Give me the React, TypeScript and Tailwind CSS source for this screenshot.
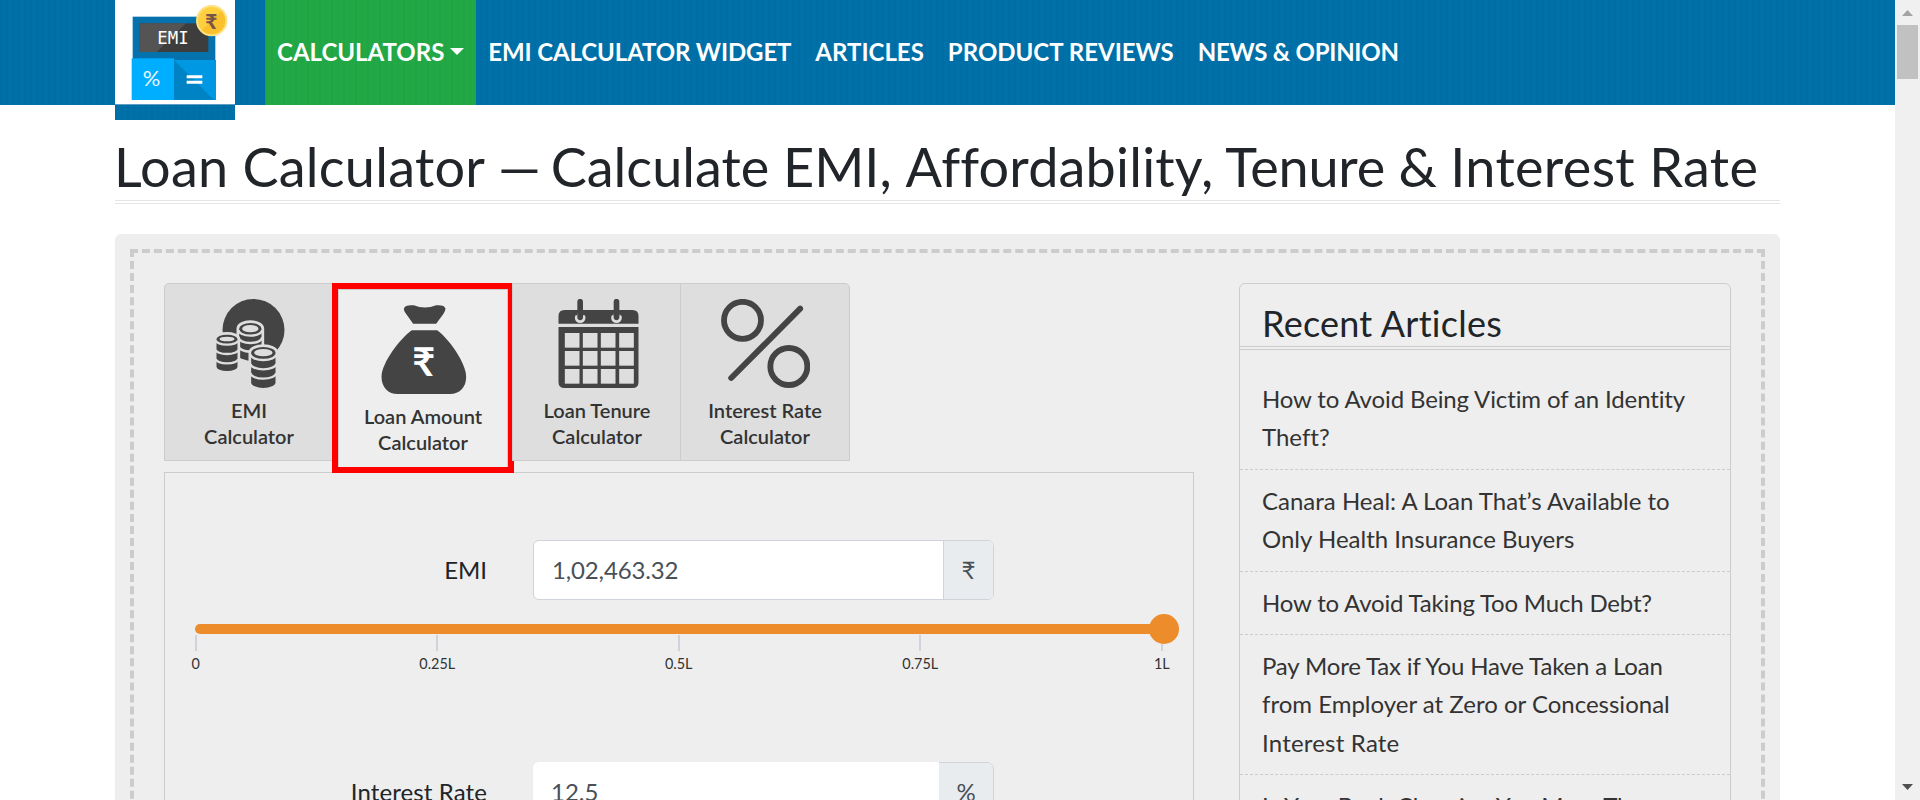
import type { ReactNode } from "react";

const dark = "#444444";

function CoinStack({ x1, x2, cy, ry, bottom, gaps, bg }: { x1: number; x2: number; cy: number; ry: number; bottom: number; gaps: number[]; bg: string }) {
  const rx = (x2 - x1) / 2;
  const cx = (x1 + x2) / 2;
  const body = `M${x1} ${cy}A${rx} ${ry} 0 0 1 ${x2} ${cy}V${bottom - ry}A${rx} ${ry} 0 0 1 ${x1} ${bottom - ry}Z`;
  return (
    <g>
      <path d={body} fill={dark} stroke={bg} strokeWidth={16} />
      <path d={body} fill={dark} />
      <ellipse cx={cx} cy={cy} rx={rx - 9} ry={ry - 6} fill={bg} />
      {gaps.map((g) => (
        <path key={g} d={`M${x1 - 2} ${g - ry}A${rx + 2} ${ry} 0 0 0 ${x2 + 2} ${g - ry}`} fill="none" stroke={bg} strokeWidth={7} />
      ))}
    </g>
  );
}

function CoinsIcon() {
  const bg = "#dedede";
  return (
    <svg className="h-[89px] w-[89px]" viewBox="163.5 87 267 267">
      <circle cx="309" cy="180" r="93" fill={dark} />
      <CoinStack x1={266} x2={333} cy={176} ry={17} bottom={241} gaps={[197, 219]} bg={bg} />
      <CoinStack x1={198} x2={261} cy={207} ry={13} bottom={303} gaps={[224, 252, 280]} bg={bg} />
      <CoinStack x1={302} x2={375} cy={248} ry={17} bottom={354} gaps={[270, 298, 326]} bg={bg} />
    </svg>
  );
}

function BagIcon() {
  return (
    <svg className="h-[89px] w-[89px]" viewBox="685.5 105 267 267">
      <path fill={dark} d="M760 116Q763 104 790 106Q823 119 857 106Q882 104 885 116Q884 124 879 131L857 161H788L765 129Q760 122 760 116Z" />
      <path fill={dark} d="M784 181H860C895 206 947 280 947 321C947 353 926 372 899 372H741C714 372 693 353 693 320C693 280 748 206 784 181Z" />
      <text x="820" y="318" textAnchor="middle" fill="#ffffff" fontFamily="Lato, sans-serif" fontWeight="700" fontSize="119">₹</text>
    </svg>
  );
}

function CalendarIcon() {
  const bg = "#dedede";
  return (
    <svg className="h-[89px] w-[89px]" viewBox="157.5 87 267 267">
      <path fill={dark} d="M174 161V138Q174 120 192 120H396Q414 120 414 138V161Z" />
      {[239, 348].map((x) => (
        <g key={x}>
          <circle cx={x} cy="143" r="16" fill={bg} />
          <path d={`M${x - 13} 120V136M${x + 13} 120V136`} stroke={dark} strokeWidth="9" />
          <path d={`M${x} 95V142`} stroke={dark} strokeWidth="17" strokeLinecap="round" />
        </g>
      ))}
      <path fill={dark} d="M174 171H414V336Q414 354 396 354H192Q174 354 174 336Z" />
      {[189, 243, 297].map((y) => [193, 247, 301, 356].map((x) => <rect key={`${x}-${y}`} x={x} y={y} width="44" height="44" fill={bg} />))}
    </svg>
  );
}

function PercentIcon() {
  return (
    <svg className="h-[89px] w-[89px]" viewBox="663.5 87 267 267" fill="none" stroke={dark} strokeWidth="17.5">
      <circle cx="728" cy="151" r="55.5" />
      <circle cx="867" cy="289.5" r="55.5" />
      <path d="M694 324L901 116" strokeLinecap="round" />
    </svg>
  );
}

function Logo() {
  return (
    <svg className="block h-[104px] w-[120px]" viewBox="45 0 360 312">
      <rect x="98" y="50" width="248" height="130" fill="#0672ad" />
      <rect x="118" y="70" width="207" height="86" fill="#3d3d3d" />
      <path d="M118 70H258L170 156H118Z" fill="#545454" />
      <text x="172" y="131" fill="#ffffff" fontFamily="DejaVu Sans Mono, monospace" fontSize="55" textLength="94" lengthAdjust="spacingAndGlyphs">EMI</text>
      <rect x="95" y="175" width="127" height="125" fill="#00aeff" />
      <rect x="222" y="180" width="126" height="120" fill="#0098e2" />
      <path d="M222 180L342 300H222Z" fill="#0083c4" />
      <text x="155" y="259" textAnchor="middle" fill="#e8f7ff" fontFamily="Lato, sans-serif" fontSize="66">%</text>
      <path d="M260 230H307M260 247H307" stroke="#ffffff" strokeWidth="9" />
      <circle cx="335" cy="62" r="47" fill="#ffe082" />
      <circle cx="335" cy="62" r="41" fill="#fdd040" />
      <path d="M364 33A41 41 0 0 1 306 91Z" fill="#fbc02d" />
      <text x="334" y="86" textAnchor="middle" fill="#795548" fontFamily="Lato, sans-serif" fontWeight="900" fontSize="62">₹</text>
    </svg>
  );
}

const blueTexture =
  "bg-[#0070a8] bg-[repeating-linear-gradient(90deg,rgba(0,0,0,0.025)_0px,rgba(0,0,0,0.025)_2px,transparent_2px,transparent_6px)]";
const greenTexture =
  "bg-[#22a946] bg-[repeating-linear-gradient(90deg,rgba(0,0,0,0.025)_0px,rgba(0,0,0,0.025)_2px,transparent_2px,transparent_6px)]";

function Header() {
  return (
    <header className={`flex h-[105px] pl-[115px] ${blueTexture}`}>
      <div className="h-[120px] w-[120px] shrink-0">
        <div className="h-[104px] bg-white"><Logo /></div>
        <div className={`h-4 border-t border-[#5d9fc4] ${blueTexture}`} />
      </div>
      <nav className="ml-[30px] flex h-[103px] items-center text-[24px] font-bold whitespace-nowrap text-white">
        <a className={`mt-[2px] flex h-[105px] items-center px-3 pb-[2px] ${greenTexture}`}>
          CALCULATORS
          <span className="ml-[6px] border-x-[7px] border-t-[7px] border-x-transparent border-t-white" />
        </a>
        <a className="px-3 tracking-[-0.12px]">EMI CALCULATOR WIDGET</a>
        <a className="px-3">ARTICLES</a>
        <a className="px-3">PRODUCT REVIEWS</a>
        <a className="px-3 tracking-[-0.25px]">NEWS &amp; OPINION</a>
      </nav>
    </header>
  );
}

function Tab({ icon, lines, className }: { icon: ReactNode; lines: string[]; className: string }) {
  return (
    <div className={`flex w-[170px] flex-col items-center border border-[#cccccc] pt-[15px] text-[20px] font-semibold leading-[26px] text-[#333333] ${className}`}>
      {icon}
      <div className="mt-[9px] text-center">
        {lines.map((l) => <div key={l}>{l}</div>)}
      </div>
    </div>
  );
}

function Tabs() {
  return (
    <div className="flex h-[189px] items-start">
      <Tab icon={<CoinsIcon />} lines={["EMI", "Calculator"]} className="h-[178px] rounded-tl-[5px] bg-[#dedede]" />
      <div className="ml-[-2px] h-[190px] w-[182px] shrink-0 border-6 border-[#ff0000] bg-[#eeeeee]">
        <Tab icon={<BagIcon />} lines={["Loan Amount", "Calculator"]} className="h-[178px] border-b-0 bg-[#eeeeee]" />
      </div>
      <Tab icon={<CalendarIcon />} lines={["Loan Tenure", "Calculator"]} className="ml-[-2px] h-[178px] bg-[#dedede]" />
      <Tab icon={<PercentIcon />} lines={["Interest Rate", "Calculator"]} className="ml-[-2px] h-[178px] rounded-tr-[5px] bg-[#dedede]" />
    </div>
  );
}

function EmiPanel() {
  return (
    <div className="h-[700px] w-[1030px] border border-[#cccccc] pt-[67px] text-[24px]">
      <div className="flex h-[60px] items-center">
        <div className="w-[322px] text-right text-[#212529]">EMI</div>
        <div className="ml-[46px] flex h-[60px] w-[461px] overflow-hidden rounded-[6px] border border-[#ced4da] bg-white text-[#495057]">
          <div className="flex flex-1 items-center pl-[18px] tracking-[-0.15px]">1,02,463.32</div>
          <div className="flex w-[50px] items-center justify-center border-l border-[#ced4da] bg-[#e9ecef]">₹</div>
        </div>
      </div>
      <div className="mt-6 ml-[30px] h-[10px] w-[970px] rounded-full bg-[#ed8c2b]">
        <div className="relative -top-[10px] left-[954px] z-10 h-[30px] w-[30px] rounded-full bg-[#ed8c2b]" />
      </div>
      <div className="mt-px ml-[-90px] flex">
        {["0", "0.25L", "0.5L", "0.75L", "1L"].map((t) => (
          <div key={t} className="flex w-[241.5px] shrink-0 flex-col items-center text-[14.4px] leading-[22px] text-[#333333]">
            <div className="h-4 w-[2px] bg-[#ced4da]" />
            <div className="mt-[2px]">{t}</div>
          </div>
        ))}
      </div>
      <div className="mt-[87px] flex h-[60px] items-center">
        <div className="w-[322px] text-right tracking-[0.1px] text-[#212529]">Interest Rate</div>
        <div className="ml-[46px] flex h-[60px] w-[461px] overflow-hidden rounded-[6px] bg-white text-[#495057]">
          <div className="flex flex-1 items-center pl-[18px]">12.5</div>
          <div className="flex w-[55px] items-center justify-center rounded-r-[6px] border border-l-0 border-[#ced4da] bg-[#e9ecef]">%</div>
        </div>
      </div>
    </div>
  );
}

const tight = "tracking-[-0.16px]";
const articles = [
  [["How to Avoid Being Victim of an Identity", "tracking-[-0.13px]"], ["Theft?", ""]],
  [["Canara Heal: A Loan That’s Available to", ""], ["Only Health Insurance Buyers", ""]],
  [["How to Avoid Taking Too Much Debt?", "tracking-[-0.18px]"]],
  [["Pay More Tax if You Have Taken a Loan", tight], ["from Employer at Zero or Concessional", ""], ["Interest Rate", "tracking-[0.2px]"]],
  [["Is Your Bank Charging You More Than", ""], ["Others?", ""]],
];

function RecentArticles() {
  return (
    <aside className="h-[900px] w-[492px] shrink-0 rounded-[6px] border border-[#cccccc]">
      <h2 className="mb-[18px] h-[66px] border-b-4 border-double border-[#cccccc] pt-[18px] pl-[22px] text-[36px] leading-[43px] tracking-[0.25px] text-[#212529]">Recent Articles</h2>
      {articles.map((a) => (
        <div key={a[0][0]} className="border-b border-dashed border-[#cccccc] py-3 pl-[22px] text-[24px] leading-[38.4px] whitespace-nowrap text-[#333333]">
          {a.map(([line, tracking]) => <div key={line} className={tracking}>{line}</div>)}
        </div>
      ))}
    </aside>
  );
}

export default function App() {
  return (
    <div className="flex h-[800px] w-[1920px] overflow-hidden bg-white font-['Lato',sans-serif] [font-variant-ligatures:none]">
      <div className="h-[800px] w-[1895px] overflow-hidden">
        <Header />
        <main className="ml-[115px] w-[1665px]">
          <h1 className="mb-[30px] h-[99px] border-b-4 border-double border-[#e5e5e5] pt-[29px] text-[54px] leading-[65px] whitespace-nowrap text-[#212529]">
            <span className="ml-[-1px] tracking-[0.25px]">Loan Calculator</span>
            <span className="ml-[-1px] mr-[-4px]"> — </span>
            Calculate EMI, <span className="tracking-[0.2px]">Affordability,</span>
            <span className="tracking-[-0.25px]"> Tenure &amp; </span>
            <span className="tracking-[0.35px]">Interest Rate</span>
          </h1>
          <section className="rounded-[6px] bg-[#eeeeee] p-[15px]">
            <div className="flex h-[1200px] justify-between border-4 border-dashed border-[#cccccc] py-[30px] pr-[30px] pl-[30px]">
              <div>
                <Tabs />
                <EmiPanel />
              </div>
              <RecentArticles />
            </div>
          </section>
        </main>
      </div>
      <div className="flex h-[800px] w-[25px] flex-col items-center bg-[#f0f0f0]">
        <svg className="h-[25px] w-[25px] shrink-0" viewBox="0 0 25 25"><path d="M12.5 10L18 16H7Z" fill="#a3a3a3" /></svg>
        <div className="h-[54px] w-[21px] bg-[#c1c1c1]" />
        <div className="flex-1" />
        <svg className="h-[25px] w-[25px] shrink-0" viewBox="0 0 25 25"><path d="M12.5 15L18 9H7Z" fill="#505050" /></svg>
      </div>
    </div>
  );
}
